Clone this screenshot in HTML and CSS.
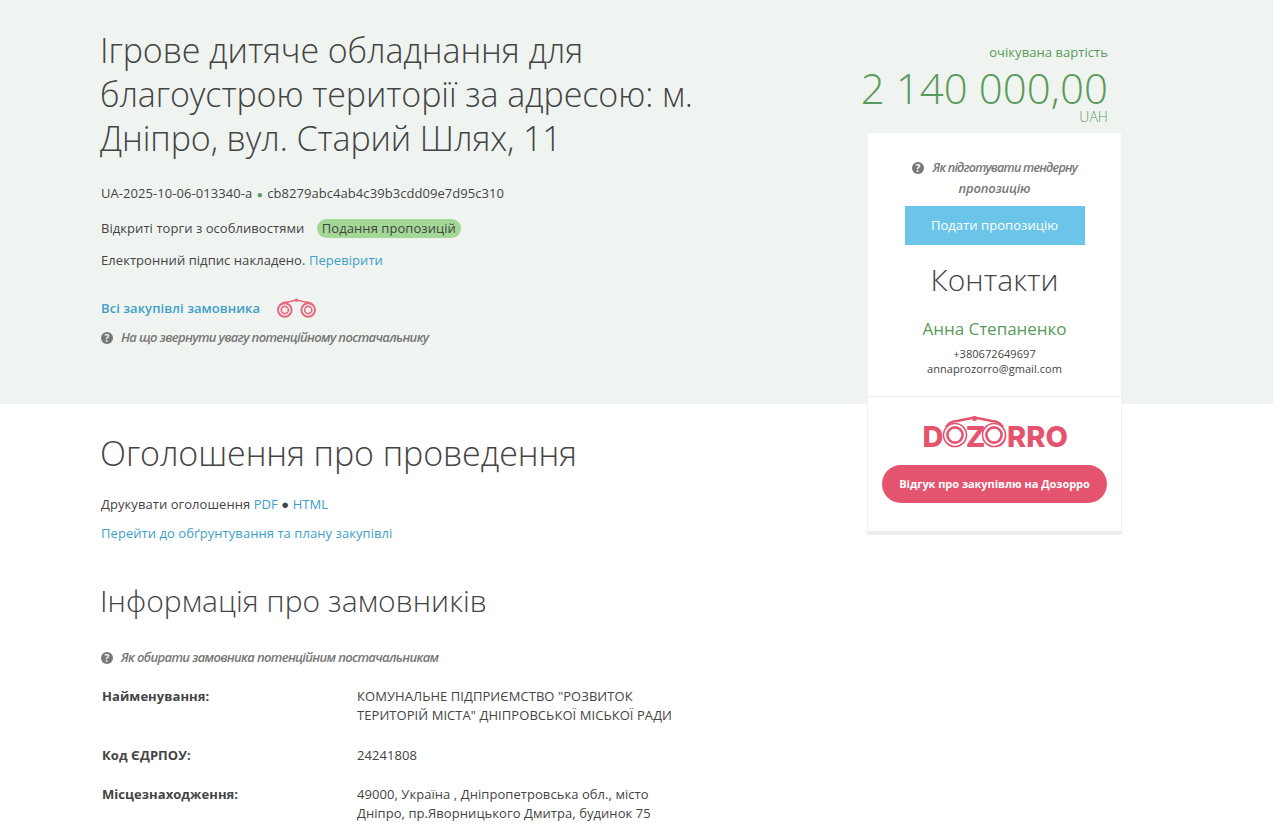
FILE: index.html
```html
<!DOCTYPE html>
<html lang="uk">
<head>
  <meta charset="UTF-8" />
  <title>Ігрове дитяче обладнання</title>
  <link rel="stylesheet" href="styles.css">
</head>
<body>
  <div class="wrap">
    <main class="main">
      <h1>Ігрове дитяче обладнання для благоустрою території за адресою: м. Дніпро, вул. Старий Шлях, 11</h1>
      <p class="ids">UA-2025-10-06-013340-a <span class="dot">●</span> cb8279abc4ab4c39b3cdd09e7d95c310</p>
      <p class="kind">Відкриті торги з особливостями <span class="status">Подання пропозицій</span></p>
      <p class="sign">Електронний підпис накладено. <a href="#">Перевірити</a></p>
      <p class="buyer">
        <a href="#">Всі закупівлі замовника</a>
        <svg class="binoc" width="40" height="20" viewBox="0 0 40 20" fill="none" stroke="#e8687f">
          <circle cx="7.8" cy="12" r="6.8" stroke-width="2"/>
          <circle cx="7.8" cy="12" r="3.6" stroke-width="1.6"/>
          <circle cx="31.2" cy="12" r="6.8" stroke-width="2"/>
          <circle cx="31.2" cy="12" r="3.6" stroke-width="1.6"/>
          <path d="M3 7 Q6 3.5 11 4 L19.5 2 L28 4 Q33 3.5 36 7" stroke-width="1.6"/>
          <circle cx="19.5" cy="2.2" r="1.8" fill="#e8687f" stroke="none"/>
        </svg>
      </p>
      <p class="hint"><span class="q">?</span>На що звернути увагу потенційному постачальнику</p>

      <h2>Оголошення про проведення</h2>
      <p class="print">Друкувати оголошення <a href="#">PDF</a> ● <a href="#">HTML</a></p>
      <p class="plan"><a href="#">Перейти до обґрунтування та плану закупівлі</a></p>

      <h3>Інформація про замовників</h3>
      <p class="hint hint-buyer"><span class="q">?</span>Як обирати замовника потенційним постачальникам</p>

      <dl class="info">
        <dt>Найменування:</dt>
        <dd>КОМУНАЛЬНЕ ПІДПРИЄМСТВО "РОЗВИТОК ТЕРИТОРІЙ МІСТА" ДНІПРОВСЬКОЇ МІСЬКОЇ РАДИ</dd>
        <dt>Код ЄДРПОУ:</dt>
        <dd>24241808</dd>
        <dt>Місцезнаходження:</dt>
        <dd>49000, Україна , Дніпропетровська обл., місто Дніпро, пр.Яворницького Дмитра, будинок 75</dd>
      </dl>
    </main>

    <aside class="side">
      <div class="price">
        <div class="price-label">очікувана вартість</div>
        <div class="price-value">2 140 000,00</div>
        <div class="price-cur">UAH</div>
      </div>
      <div class="card">
        <div class="card-top">
          <p class="how"><span class="q">?</span>Як підготувати тендерну пропозицію</p>
          <a class="submit" href="#">Подати пропозицію</a>
          <div class="contacts-title">Контакти</div>
          <div class="contact-name">Анна Степаненко</div>
          <div class="contact-line">+380672649697</div>
          <div class="contact-line">annaprozorro@gmail.com</div>
        </div>
        <div class="card-bottom">
          <div class="logo">
            DOZORRO
            <svg class="logo-rings" width="144" height="32" viewBox="0 0 144 32" fill="#fff" stroke="#e5546f">
              <path d="M23 11 Q27 5 34 5 L51.5 1.5 L69 5 Q76 5 80 11" fill="none" stroke-width="2.4"/>
              <circle cx="51.5" cy="2.5" r="2.5" fill="#e5546f" stroke="none"/>
              <circle cx="32" cy="19" r="11.5" stroke-width="1.6"/>
              <circle cx="32" cy="19" r="7.6" stroke-width="2.6"/>
              <circle cx="71" cy="19" r="11.5" stroke-width="1.6"/>
              <circle cx="71" cy="19" r="7.6" stroke-width="2.6"/>
            </svg>
          </div>
          <a class="review" href="#">Відгук про закупівлю на Дозорро</a>
        </div>
      </div>
    </aside>
  </div>
</body>
</html>
```

FILE: styles.css
```css
body {
  margin: 0;
  height: 836px;
  overflow: hidden;
  font-family: "Open Sans", sans-serif;
  font-size: 13px;
  line-height: 19px;
  letter-spacing: 0.06px;
  color: #444;
  background: linear-gradient(#f0f4f1 404px, #fff 404px);
}

a {
  color: #3c9fc9;
  text-decoration: none;
}

p {
  margin: 0;
}

.wrap {
  display: flex;
  padding-left: 100px;
}

.main {
  width: 600px;
  padding-top: 28px;
}

h1 {
  margin: 0 0 24px;
  font-size: 34px;
  font-weight: 300;
  letter-spacing: -0.1px;
  line-height: 44px;
  color: #444;
}

.ids,
.kind,
.sign,
.print,
.plan {
  padding-left: 1px;
}

.dot {
  color: #5a9a5c;
  font-size: 10px;
  margin: 0 1px;
}

.ids {
  margin-bottom: 15px;
}

.kind {
  margin-bottom: 13px;
}

.status {
  display: inline-block;
  margin-left: 9px;
  padding: 0 5px;
  border-radius: 10px;
  background: #a3d897;
}

.buyer {
  display: flex;
  align-items: center;
  gap: 17px;
  margin-top: 28px;
  padding-left: 1px;
  font-weight: 600;
}

.hint {
  margin-top: 10px;
  padding-left: 1px;
  font-style: italic;
  font-weight: 600;
  font-size: 13px;
  letter-spacing: -0.65px;
  color: #777;
}

.q {
  display: inline-block;
  width: 12px;
  height: 12px;
  margin-right: 8px;
  border-radius: 50%;
  background: #777;
  color: #f0f4f1;
  font-size: 10px;
  font-weight: 700;
  font-style: normal;
  letter-spacing: 0;
  line-height: 12px;
  text-align: center;
  vertical-align: 0;
}

h2 {
  margin: 84px 0 20px;
  font-size: 34px;
  font-weight: 300;
  letter-spacing: -0.1px;
  line-height: 44px;
}

.print {
  margin-bottom: 10px;
}

h3 {
  margin: 38px 0 27px;
  font-size: 30px;
  font-weight: 300;
  line-height: 40px;
}

.hint-buyer {
  margin-bottom: 20px;
}

.info {
  display: grid;
  grid-template-columns: 256px 330px;
  row-gap: 20.5px;
  margin: 0;
}

.info dt {
  padding-left: 2px;
  font-weight: 700;
}

.info dd {
  margin: 0 0 0 1px;
}

.side {
  margin-left: 167px;
  width: 255px;
  padding-top: 43px;
}

.price {
  margin: 0 0 7px -30px;
  padding-right: 14px;
  text-align: right;
  white-space: nowrap;
  color: #5a9a5c;
}

.price-value {
  margin-top: 8px;
  font-size: 42px;
  font-weight: 300;
  line-height: 36px;
}

.price-cur {
  margin-top: 2px;
  font-size: 14px;
  font-weight: 300;
  line-height: 17px;
}

.card {
  background: #fff;
  border: 1px solid #f0f1f0;
  border-bottom: 4px solid #eceeec;
  text-align: center;
}

.card-top {
  padding: 25px 0 20px;
  border-bottom: 1px solid #eee;
}

.how {
  width: 190px;
  margin: 0 auto 8px;
  font-style: italic;
  font-weight: 600;
  letter-spacing: -0.2px;
  line-height: 20px;
  color: #777;
}

.how::first-line {
  font-size: 12.5px;
  letter-spacing: -0.75px;
}

.how .q {
  margin-right: 9px;
  background: #777;
  color: #fff;
}

.submit {
  display: block;
  width: 180px;
  height: 39px;
  margin: 0 auto;
  line-height: 39px;
  background: #6bc5e8;
  color: #fff;
}

.contacts-title {
  margin-top: 15px;
  font-size: 30px;
  font-weight: 300;
  line-height: 40px;
}

.contact-name {
  margin-top: 18px;
  font-size: 17px;
  letter-spacing: -0.02px;
  line-height: 22px;
  color: #5a9a5c;
}

.contact-line {
  font-size: 11px;
  line-height: 15px;
}

.contact-name + .contact-line {
  margin-top: 6px;
}

.card-bottom {
  padding: 18px 14px 28px;
}

.logo {
  position: relative;
  width: 144px;
  height: 40px;
  margin: 0 auto;
  font-family: "Inter", sans-serif;
  font-size: 29px;
  font-weight: 800;
  line-height: 43px;
  letter-spacing: 0;
  color: #e5546f;
  text-align: left;
}

.logo-rings {
  position: absolute;
  left: 0;
  top: 1px;
}

.review {
  display: block;
  height: 38px;
  margin-top: 10px;
  border-radius: 19px;
  line-height: 38px;
  background: #e5546f;
  color: #fff;
  font-size: 11px;
  font-weight: 700;
  letter-spacing: -0.03px;
}
```
